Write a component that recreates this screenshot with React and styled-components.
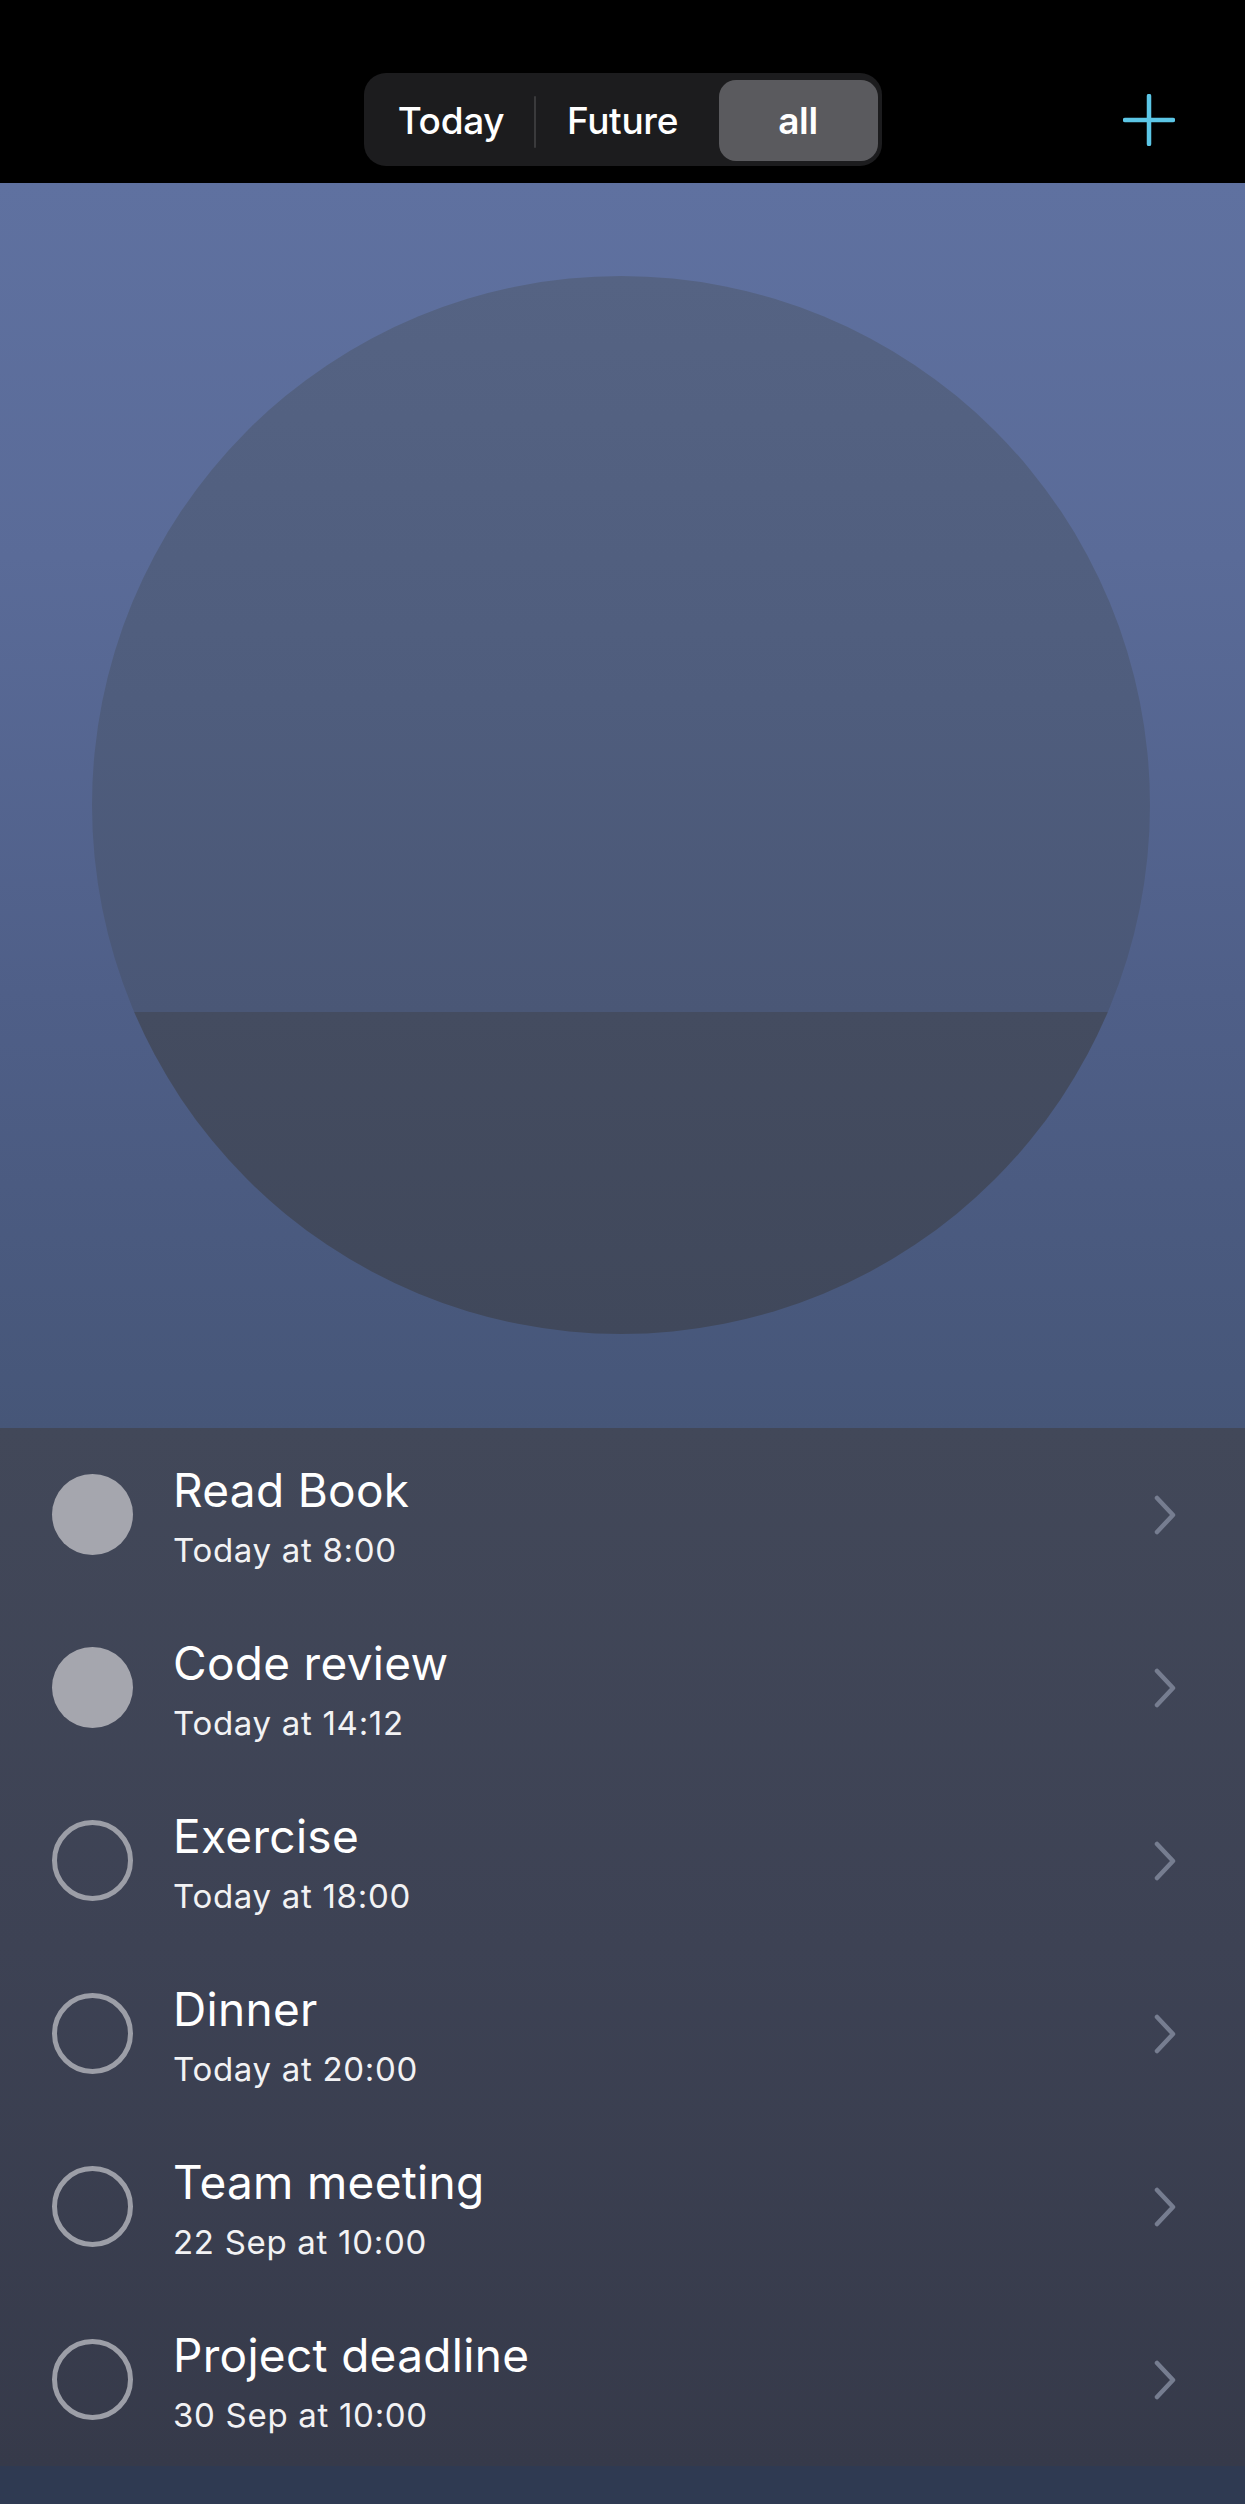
import React from 'react';
import styled, { createGlobalStyle } from 'styled-components';

const GlobalStyle = createGlobalStyle`
  html, body {
    margin: 0;
    padding: 0;
    background: #000;
  }
  * {
    box-sizing: border-box;
  }
`;

const Screen = styled.div`
  width: 1245px;
  height: 2504px;
  display: flex;
  flex-direction: column;
  font-family: Inter, "Noto Sans", sans-serif;
  color: #fff;
  background: #2f3a52;
  overflow: hidden;
`;

const Header = styled.header`
  height: 183px;
  flex-shrink: 0;
  padding-top: 73px;
  background: #000;
  display: grid;
  grid-template-columns: 1fr auto 1fr;
  align-items: start;
`;

const Segmented = styled.div`
  grid-column: 2;
  width: 518px;
  height: 93px;
  padding: 7px 4px 5px 5px;
  border-radius: 22px;
  background: #1c1c1e;
  display: flex;
  align-items: center;
`;

const Segment = styled.button`
  width: ${p => p.$width}px;
  height: 100%;
  margin-left: ${p => (p.$active ? 9 : 0)}px;
  border: none;
  border-radius: 17px;
  background: ${p => (p.$active ? '#5a5a5e' : 'transparent')};
  color: #fff;
  font-family: inherit;
  font-size: 37px;
  font-weight: ${p => (p.$active ? 600 : 500)};
  letter-spacing: -0.3px;
  padding: 0;
`;

const Divider = styled.span`
  width: 2px;
  height: 52px;
  margin-top: 2px;
  background: #3a3a3c;
  border-radius: 1px;
`;

const AddButton = styled.button`
  grid-column: 3;
  justify-self: end;
  margin-right: 70px;
  margin-top: 21px;
  width: 52px;
  height: 52px;
  padding: 0;
  border: none;
  background: transparent;
  display: flex;
`;

const Hero = styled.section`
  height: 1245px;
  flex-shrink: 0;
  padding-top: 93px;
  background: linear-gradient(180deg, #5f71a0 0%, #5a6b98 30%, #4f5f88 65%, #465678 100%);
  display: flex;
  justify-content: center;
`;

const Gauge = styled.div`
  width: 1058px;
  height: 1058px;
  margin-left: -4px;
  border-radius: 50%;
  background: linear-gradient(
    180deg,
    #556383 0%,
    #4f5d7d 40%,
    #4a5776 69.6%,
    #444c60 69.6%,
    #40485b 100%
  );
`;

const List = styled.ul`
  list-style: none;
  margin: 0;
  padding: 0;
  background: linear-gradient(180deg, #424859 0%, #3d4254 50%, #363a4a 100%);
`;

const Row = styled.li`
  height: 173px;
  padding: 0 68px 0 52px;
  display: flex;
  align-items: center;
`;

const Check = styled.span`
  width: 81px;
  height: 81px;
  flex-shrink: 0;
  border-radius: 50%;
  background: ${p => (p.$done ? '#a5a6ae' : 'transparent')};
  border: ${p => (p.$done ? 'none' : '5px solid #9c9ea7')};
`;

const TextBlock = styled.div`
  flex: 1;
  margin-left: 40px;
  padding-top: 4px;
  display: flex;
  flex-direction: column;
`;

const Title = styled.div`
  font-size: 46px;
  line-height: 55px;
  font-weight: 400;
  letter-spacing: 0.3px;
`;

const When = styled.div`
  margin-top: 12px;
  font-size: 33px;
  line-height: 40px;
  letter-spacing: 0.7px;
  color: #f2f2f4;
`;

const Chevron = styled.svg`
  width: 24px;
  height: 40px;
  flex-shrink: 0;
`;

const tasks = [
  { title: 'Read Book', when: 'Today at 8:00', done: true },
  { title: 'Code review', when: 'Today at 14:12', done: true },
  { title: 'Exercise', when: 'Today at 18:00', done: false },
  { title: 'Dinner', when: 'Today at 20:00', done: false },
  { title: 'Team meeting', when: '22 Sep at 10:00', done: false },
  { title: 'Project deadline', when: '30 Sep at 10:00', done: false },
];

const App = () => (
  <Screen>
    <GlobalStyle />
    <Header>
      <Segmented>
        <Segment $width={165}>Today</Segment>
        <Divider />
        <Segment $width={174}>Future</Segment>
        <Segment $width={159} $active>all</Segment>
      </Segmented>
      <AddButton aria-label="Add">
        <svg width="52" height="52" viewBox="0 0 52 52">
          <path d="M26 2 V50 M2 26 H50" stroke="#5cc6e6" strokeWidth="4.5" strokeLinecap="round" fill="none" />
        </svg>
      </AddButton>
    </Header>
    <Hero>
      <Gauge />
    </Hero>
    <List>
      {tasks.map(task => (
        <Row key={task.title}>
          <Check $done={task.done} />
          <TextBlock>
            <Title>{task.title}</Title>
            <When>{task.when}</When>
          </TextBlock>
          <Chevron viewBox="0 0 24 40">
            <path d="M4 3 L20 20 L4 37" stroke="#767d90" strokeWidth="4.5" strokeLinecap="round" strokeLinejoin="round" fill="none" />
          </Chevron>
        </Row>
      ))}
    </List>
  </Screen>
);

export default App;
